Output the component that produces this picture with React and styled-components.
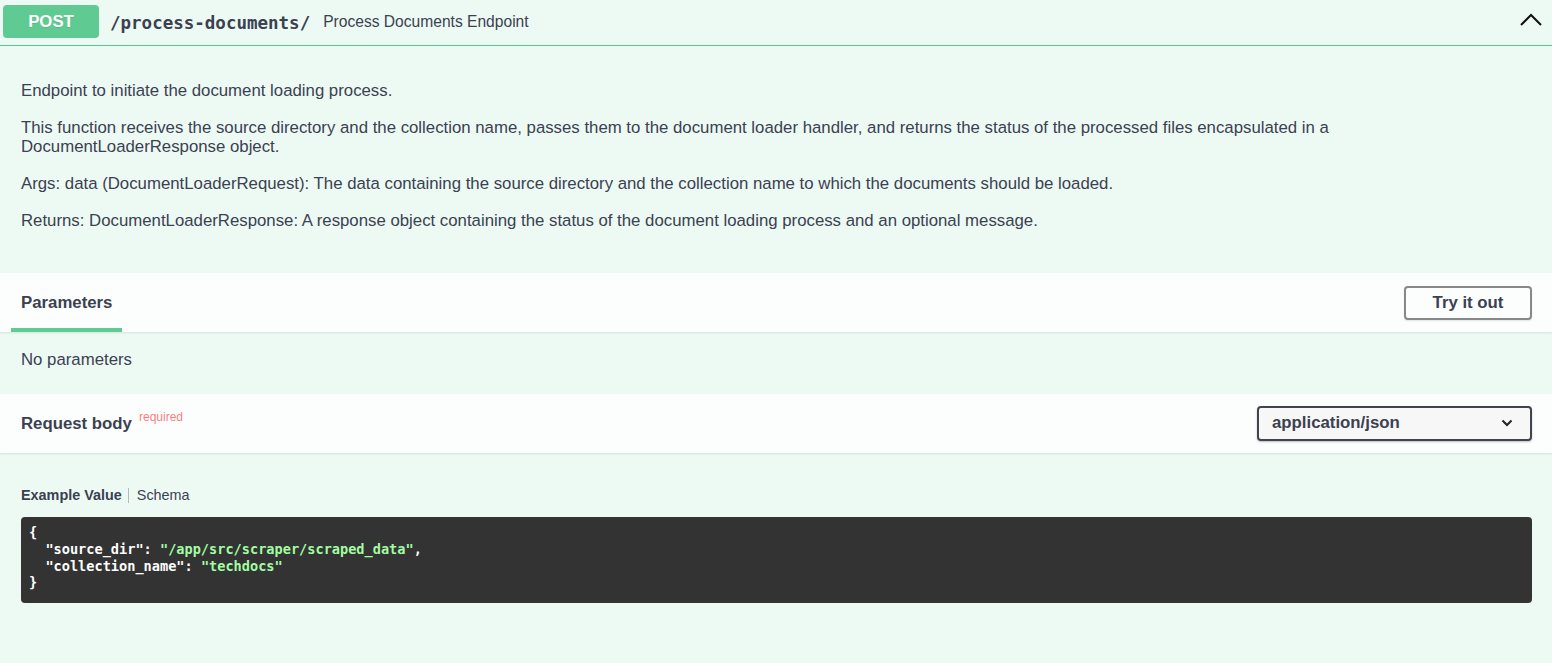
import React from "react";
import styled, { createGlobalStyle } from "styled-components";

const Global = createGlobalStyle`
  html, body { margin: 0; padding: 0; }
  body {
    background: #edfaf4;
    font-family: "Liberation Sans", Arial, sans-serif;
    color: #3b4151;
  }
`;

const Block = styled.div`
  background: #edfaf4;
  min-height: 663px;
`;

const Summary = styled.div`
  display: flex;
  align-items: center;
  height: 45px;
  padding: 0 10px 0 3px;
  border-bottom: 1px solid #49cc90;
`;

const Method = styled.span`
  display: flex;
  align-items: center;
  justify-content: center;
  width: 96px;
  height: 33px;
  margin-top: -2px;
  border-radius: 4px;
  background: #5fca92;
  color: #fff;
  font-size: 16.8px;
  font-weight: 700;
  text-shadow: 0 1px 0 rgba(0, 0, 0, 0.1);
`;

const Path = styled.span`
  margin-left: 11px;
  font-family: "DejaVu Sans Mono", "Liberation Mono", monospace;
  font-size: 17.5px;
  font-weight: 700;
  color: #3b4151;
`;

const SummaryText = styled.span`
  margin-left: 13px;
  margin-top: -2px;
  font-size: 15.6px;
  color: #3b4151;
  flex: 1;
`;

const Arrow = styled.svg`
  width: 22px;
  height: 14px;
  margin-top: -6px;
`;

const Description = styled.div`
  padding: 18px 21px 25px;
  p {
    margin: 17.6px 0;
    font-size: 16.8px;
    line-height: 19.5px;
  }
  p:first-child {
    margin-top: 16.6px;
  }
`;

const SectionHeader = styled.div`
  display: flex;
  align-items: center;
  justify-content: space-between;
  height: 59px;
  padding: 0 20px 0 11px;
  background: rgba(255, 255, 255, 0.8);
  box-shadow: 0 1px 2px rgba(0, 0, 0, 0.1);
`;

const Tab = styled.h4`
  margin: 0 0 -3px;
  padding: 2px 10px 0;
  height: 56px;
  box-sizing: border-box;
  display: flex;
  align-items: center;
  font-size: 16.8px;
  font-weight: 700;
  border-bottom: 4px solid #5fca92;
`;

const Title = styled.h4`
  margin: 0 0 0 10px;
  font-size: 16.8px;
  font-weight: 700;
  display: flex;
  align-items: flex-start;
  padding-top: 2px;
`;

const Required = styled.sup`
  margin-left: 7px;
  margin-top: -4px;
  font-size: 12px;
  font-weight: 400;
  color: rgba(255, 0, 0, 0.55);
`;

const Button = styled.button`
  width: 128px;
  height: 34px;
  border: 2px solid #888;
  border-radius: 4px;
  background: transparent;
  box-shadow: 0 1px 2px rgba(0, 0, 0, 0.1);
  font-family: inherit;
  font-size: 16.8px;
  font-weight: 700;
  color: #3b4151;
  margin-top: 1px;
`;

const Select = styled.div`
  display: flex;
  align-items: center;
  justify-content: space-between;
  box-sizing: border-box;
  width: 275px;
  height: 35px;
  padding: 0 17px 0 13px;
  border: 2px solid #41444e;
  border-radius: 4px;
  background: #f7f7f7;
  box-shadow: 0 1px 2px rgba(0, 0, 0, 0.25);
  font-size: 16.8px;
  font-weight: 700;
  color: #3b4151;
`;

const Plain = styled.div`
  padding: 18px 21px 24px;
  font-size: 16.8px;
  line-height: 19.3px;
`;

const BodyArea = styled.div`
  padding: 34px 20px 0 21px;
`;

const ModelTabs = styled.div`
  display: flex;
  align-items: center;
  font-size: 14.4px;
  height: 17px;
`;

const ModelTab = styled.span`
  font-weight: ${(p) => (p.active ? 700 : 400)};
  padding: ${(p) => (p.active ? "0 6px 0 0" : "0 0 0 8px")};
  border-right: ${(p) => (p.active ? "1px solid rgba(0,0,0,.25)" : "none")};
  line-height: 15px;
`;

const Code = styled.pre`
  margin: 13px 0 0;
  padding: 7.6px 8px 11.6px;
  background: #333;
  border-radius: 4px;
  font-family: "DejaVu Sans Mono", "Liberation Mono", monospace;
  font-size: 13.6px;
  line-height: 16.7px;
  font-weight: 700;
  color: #fff;
`;

const Str = styled.span`
  color: #a2fca2;
`;

export default function App() {
  return (
    <>
      <Global />
      <Block>
        <Summary>
          <Method>POST</Method>
          <Path>/process-documents/</Path>
          <SummaryText>Process Documents Endpoint</SummaryText>
          <Arrow viewBox="0 0 22 14">
            <polyline points="1,12 11,2 21,12" fill="none" stroke="#111" strokeWidth="2" />
          </Arrow>
        </Summary>
        <Description>
          <p>Endpoint to initiate the document loading process.</p>
          <p>
            This function receives the source directory and the collection name, passes them to the document loader
            handler, and returns the status of the processed files encapsulated in a DocumentLoaderResponse object.
          </p>
          <p>
            Args: data (DocumentLoaderRequest): The data containing the source directory and the collection name to
            which the documents should be loaded.
          </p>
          <p>
            Returns: DocumentLoaderResponse: A response object containing the status of the document loading process
            and an optional message.
          </p>
        </Description>
        <SectionHeader>
          <Tab>Parameters</Tab>
          <Button>Try it out</Button>
        </SectionHeader>
        <Plain>No parameters</Plain>
        <SectionHeader>
          <Title>
            Request body<Required>required</Required>
          </Title>
          <Select>
            application/json
            <svg width="12" height="8" viewBox="0 0 12 8">
              <polyline points="1.5,1.5 6,6 10.5,1.5" fill="none" stroke="#222" strokeWidth="2" />
            </svg>
          </Select>
        </SectionHeader>
        <BodyArea>
          <ModelTabs>
            <ModelTab active>Example Value</ModelTab>
            <ModelTab>Schema</ModelTab>
          </ModelTabs>
          <Code>
            {"{\n  "}
            {'"source_dir": '}
            <Str>"/app/src/scraper/scraped_data"</Str>
            {",\n  "}
            {'"collection_name": '}
            <Str>"techdocs"</Str>
            {"\n}"}
          </Code>
        </BodyArea>
      </Block>
    </>
  );
}
